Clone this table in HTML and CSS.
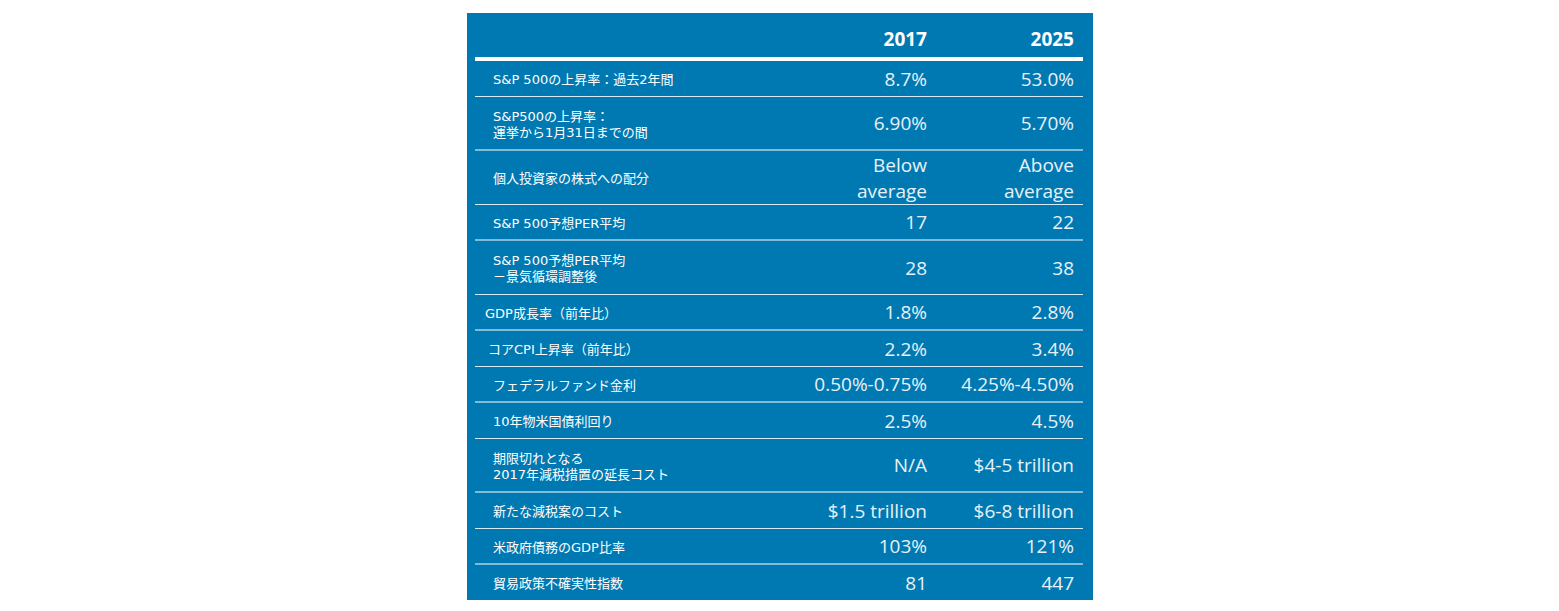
FILE: index.html
```html
<!DOCTYPE html>
<html lang="ja">
<head>
<meta charset="utf-8">
<title>2017 vs 2025</title>
<link rel="stylesheet" href="styles.css">
</head>
<body>
<div class="panel">
  <div class="head">
    <div class="label"></div>
    <div class="val c1">2017</div>
    <div class="val c2">2025</div>
  </div>
  <div class="rule"></div>
  <div class="row">
    <div class="label">S&amp;P 500の上昇率：過去2年間</div>
    <div class="val c1">8.7%</div>
    <div class="val c2">53.0%</div>
  </div>
  <div class="row tall soft">
    <div class="label">S&amp;P500の上昇率：<br>運挙から1月31日までの間</div>
    <div class="val c1">6.90%</div>
    <div class="val c2">5.70%</div>
  </div>
  <div class="row tall">
    <div class="label">個人投資家の株式への配分</div>
    <div class="val c1 two">Below<br>average</div>
    <div class="val c2 two">Above<br>average</div>
  </div>
  <div class="row soft">
    <div class="label">S&amp;P 500予想PER平均</div>
    <div class="val c1">17</div>
    <div class="val c2">22</div>
  </div>
  <div class="row tall">
    <div class="label">S&amp;P 500予想PER平均<br>－景気循環調整後</div>
    <div class="val c1">28</div>
    <div class="val c2">38</div>
  </div>
  <div class="row soft">
    <div class="label in-gdp">GDP成長率（前年比）</div>
    <div class="val c1">1.8%</div>
    <div class="val c2">2.8%</div>
  </div>
  <div class="row">
    <div class="label in-cpi">コアCPI上昇率（前年比）</div>
    <div class="val c1">2.2%</div>
    <div class="val c2">3.4%</div>
  </div>
  <div class="row soft">
    <div class="label">フェデラルファンド金利</div>
    <div class="val c1">0.50%-0.75%</div>
    <div class="val c2">4.25%-4.50%</div>
  </div>
  <div class="row">
    <div class="label">10年物米国債利回り</div>
    <div class="val c1">2.5%</div>
    <div class="val c2">4.5%</div>
  </div>
  <div class="row tall soft">
    <div class="label">期限切れとなる<br>2017年減税措置の延長コスト</div>
    <div class="val c1">N/A</div>
    <div class="val c2">$4-5 trillion</div>
  </div>
  <div class="row">
    <div class="label">新たな減税案のコスト</div>
    <div class="val c1">$1.5 trillion</div>
    <div class="val c2">$6-8 trillion</div>
  </div>
  <div class="row soft">
    <div class="label">米政府債務のGDP比率</div>
    <div class="val c1">103%</div>
    <div class="val c2">121%</div>
  </div>
  <div class="row last">
    <div class="label">貿易政策不確実性指数</div>
    <div class="val c1">81</div>
    <div class="val c2">447</div>
  </div>
</div>
</body>
</html>
```
FILE: styles.css
```css
html, body {
  margin: 0;
  padding: 0;
  background: #ffffff;
}
body {
  padding: 13px 0 0 467px;
}
.panel {
  width: 626px;
  height: 587px;
  box-sizing: border-box;
  background: #0079b3;
  padding: 0 10px 0 8px;
  overflow: hidden;
}
.head, .row {
  display: grid;
  grid-template-columns: 327px 140px 141px;
  align-items: center;
  box-sizing: border-box;
}
.head {
  height: 44px;
  align-items: end;
  padding-bottom: 8px;
}
.head .val {
  font-family: "Open Sans", "Lato", sans-serif;
  font-weight: 700;
  font-size: 19px;
  line-height: 20px;
  color: #ffffff;
}
.rule {
  height: 4px;
  background: #ffffff;
}
.row {
  height: 36px;
  border-bottom: 1px solid rgba(255, 255, 255, 0.85);
}
.row.soft {
  border-bottom: 2px solid rgba(255, 255, 255, 0.5);
}
.row.tall {
  height: 54px;
}
.row.last {
  height: 35px;
  border-bottom: none;
}
.label {
  padding-left: 18px;
  padding-top: 3px;
  font-family: "DejaVu Sans", "Noto Sans CJK JP", sans-serif;
  font-size: 13px;
  line-height: 16px;
  color: #ffffff;
  white-space: nowrap;
}
.label.in-gdp {
  padding-left: 10px;
}
.label.in-cpi {
  padding-left: 13px;
}
.val {
  text-align: right;
  font-family: "Open Sans", "Lato", sans-serif;
  font-weight: 400;
  font-size: 19px;
  line-height: 24px;
  color: #e8f1f7;
  white-space: nowrap;
}
.val.two {
  line-height: 26px;
}
.val.c1 {
  padding-right: 15px;
}
.val.c2 {
  padding-right: 9px;
}
```
